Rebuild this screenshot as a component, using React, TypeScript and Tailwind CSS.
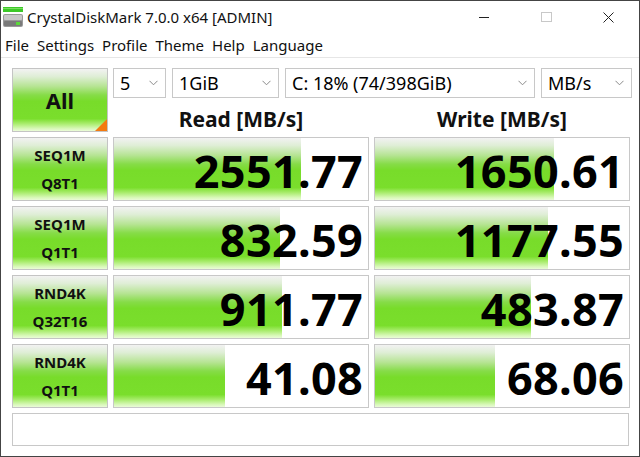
import React from "react";

const GRAD =
  "linear-gradient(to bottom, #f2f2f2 0%, #dfeed6 12%, #b6e493 28%, #86dc48 42%, #78dc2a 52%, #7ade2c 80%, #a8ec6c 88%, #d8f8b8 96%, #eafbd8 100%)";

function Chevron() {
  return (
    <svg width="9" height="6" viewBox="0 0 9 6" className="shrink-0">
      <path d="M0.5 0.8 L4.5 4.8 L8.5 0.8" fill="none" stroke="#8a8a8a" strokeWidth="1" />
    </svg>
  );
}

function Combo({ w, text }: { w: string; text: string }) {
  return (
    <div
      className={`${w} h-[30px] border border-[#c8c8c8] bg-white flex items-center justify-between pl-[6px] pr-[7px] text-[18px] text-black`}
    >
      <span className="leading-none">{text}</span>
      <Chevron />
    </div>
  );
}

function Label({ a, b }: { a: string; b: string }) {
  return (
    <div
      className="w-[96px] h-[64px] border border-[#c4c4c4] flex flex-col items-center justify-center font-bold text-[15px] leading-[30px] text-[#111]"
      style={{ background: GRAD }}
    >
      <span className="leading-[28px]">{a}</span>
      <span className="leading-[28px]">{b}</span>
    </div>
  );
}

function Cell({ value, pct }: { value: string; pct: number }) {
  return (
    <div className="relative w-[256px] h-[64px] border border-[#c8c8c8] bg-white overflow-hidden">
      <div className="absolute left-0 top-0 bottom-0" style={{ width: `${pct}px`, background: GRAD }} />
      <div className="relative h-full flex items-center justify-end pr-[5px] pt-[2px]">
        <span className="font-bold text-[45px] leading-none text-black tracking-[0.3px]">{value}</span>
      </div>
    </div>
  );
}

const rows = [
  { a: "SEQ1M", b: "Q8T1", r: "2551.77", rp: 187, w: "1650.61", wp: 179 },
  { a: "SEQ1M", b: "Q1T1", r: "832.59", rp: 166, w: "1177.55", wp: 173 },
  { a: "RND4K", b: "Q32T16", r: "911.77", rp: 168, w: "483.87", wp: 156 },
  { a: "RND4K", b: "Q1T1", r: "41.08", rp: 111, w: "68.06", wp: 120 },
];

export default function App() {
  return (
    <div
      className="w-[640px] h-[457px] bg-white border border-[#444444] flex flex-col overflow-hidden text-black"
      style={{ fontFamily: '"Noto Sans", "Open Sans", sans-serif' }}
    >
      {/* Title bar */}
      <div className="h-[32px] flex items-center shrink-0">
        <div className="w-[26px] h-full flex items-center pl-[2px]">
          <svg width="20" height="21" viewBox="0 0 20 21">
            <rect x="0" y="0" width="20" height="5" fill="#3cc828" />
            <rect x="0" y="1" width="20" height="1" fill="#7ae060" />
            <rect x="0" y="7" width="20" height="13" rx="2" fill="#9a9a9a" />
            <rect x="1" y="8" width="18" height="5" rx="1" fill="#c8c8c8" />
            <rect x="1" y="14" width="18" height="5" rx="1" fill="#7a7a7a" />
            <rect x="13" y="15" width="4" height="3" fill="#5ad83a" />
          </svg>
        </div>
        <span className="text-[15px] leading-none pt-[1px] text-[#111]">CrystalDiskMark 7.0.0 x64 [ADMIN]</span>
        <div className="ml-auto flex h-full">
          <div className="w-[62px] h-full flex items-center justify-center">
            <div className="w-[10px] h-[1px] bg-[#222]" />
          </div>
          <div className="w-[62px] h-full flex items-center justify-center">
            <div className="w-[11px] h-[10px] border border-[#c8c8c8]" />
          </div>
          <div className="w-[62px] h-full flex items-center justify-center">
            <svg width="11" height="11" viewBox="0 0 11 11">
              <path d="M0.5 0.5 L10.5 10.5 M10.5 0.5 L0.5 10.5" stroke="#222" strokeWidth="1" />
            </svg>
          </div>
        </div>
      </div>

      {/* Menu bar */}
      <div className="h-[24px] flex items-center text-[15px] text-[#111] shrink-0 pl-[0px]">
        {["File", "Settings", "Profile", "Theme", "Help", "Language"].map((m) => (
          <span key={m} className="px-[4px] leading-none">
            {m}
          </span>
        ))}
      </div>
      <div className="h-[1px] bg-[#e6e6e6] shrink-0" />

      {/* Content */}
      <div className="flex flex-col gap-[5px] pl-[11px] pt-[10px]">
        <div className="flex gap-[5px]">
          <div
            className="relative w-[96px] h-[64px] border border-[#c4c4c4] flex items-center justify-center font-bold text-[22px] text-[#111]"
            style={{ background: GRAD }}
          >
            All
            <div className="absolute right-0 bottom-0 w-0 h-0 border-l-[12px] border-l-transparent border-b-[12px] border-b-[#f47a10]" />
          </div>
          <div className="flex flex-col">
            <div className="flex gap-[6px]">
              <Combo w="w-[53px]" text="5" />
              <Combo w="w-[107px]" text="1GiB" />
              <Combo w="w-[250px]" text="C: 18% (74/398GiB)" />
              <Combo w="w-[91px]" text="MB/s" />
            </div>
            <div className="flex gap-[5px] h-[34px] font-bold text-[21px] text-[#111]">
              <div className="w-[256px] text-center leading-none pt-[11px]">Read [MB/s]</div>
              <div className="w-[256px] text-center leading-none pt-[11px]">Write [MB/s]</div>
            </div>
          </div>
        </div>

        {rows.map((r, i) => (
          <div key={i} className="flex gap-[5px]">
            <Label a={r.a} b={r.b} />
            <Cell value={r.r} pct={r.rp} />
            <Cell value={r.w} pct={r.wp} />
          </div>
        ))}

        <div className="w-[617px] h-[33px] border border-[#c8c8c8] bg-white" />
      </div>
    </div>
  );
}
